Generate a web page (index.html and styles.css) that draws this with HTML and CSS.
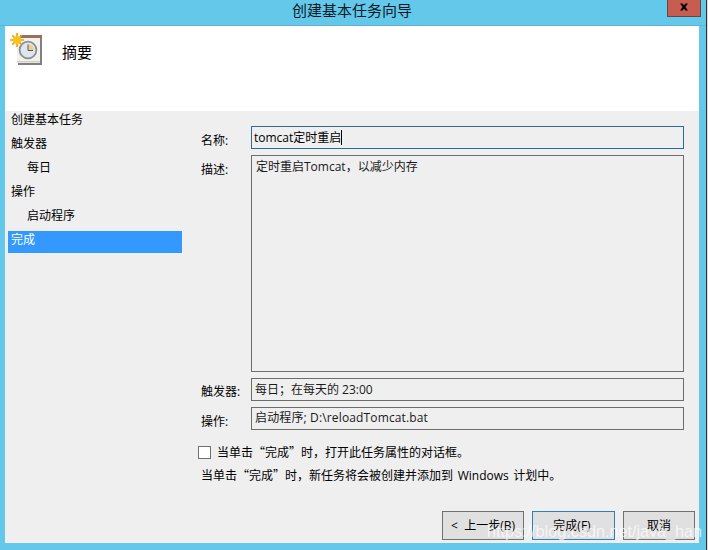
FILE: index.html
```html
<!DOCTYPE html>
<html lang="zh-CN">
<head>
<meta charset="utf-8">
<title>创建基本任务向导</title>
<link rel="stylesheet" href="styles.css">
</head>
<body>
<div class="window">
  <div class="titlebar">
    <span class="title">创建基本任务向导</span>
    <div class="close">
      <svg width="10" height="8" viewBox="0 0 10 8"><path d="M1 0.5h2.6L5 2.4 6.4 .5H9L6.4 4 9 7.5H6.4L5 5.6 3.6 7.5H1L3.6 4z" fill="#000"/></svg>
    </div>
  </div>
  <div class="client">
    <div class="header">
      <svg class="task-icon" width="34" height="34" viewBox="0 0 34 34">
        <rect x="7" y="4" width="24" height="28" fill="#808080"/>
        <rect x="6" y="5" width="23" height="25" fill="#f2f1ea"/>
        <rect x="6" y="28" width="23" height="1.4" fill="#cfcfca"/>
        <rect x="9" y="2" width="22" height="3" fill="#97705f"/>
        <circle cx="17" cy="17" r="8.4" fill="#dfe6ee" stroke="#8b9095" stroke-width="1.8"/>
        <path d="M17 11a6 6 0 0 1 6 6h-6z" fill="#f0cf8a"/>
        <path d="M17 11.5V17.5H22" fill="none" stroke="#4c5a68" stroke-width="1"/>
        <g stroke="#f29a0c" stroke-width="1.6">
          <path d="M6 0V14M-1 7H13M1.2 2.2L10.8 11.8M10.8 2.2L1.2 11.8"/>
        </g>
        <circle cx="6" cy="7" r="4" fill="#fbc318"/>
      </svg>
      <span class="header-title">摘要</span>
    </div>
    <div class="main">
      <nav class="steps">
        <div class="step">创建基本任务</div>
        <div class="step">触发器</div>
        <div class="step sub">每日</div>
        <div class="step">操作</div>
        <div class="step sub">启动程序</div>
        <div class="step current">完成</div>
      </nav>
      <div class="content">
        <div class="form">
          <label class="label">名称:</label>
          <div class="field focus">tomcat定时重启<span class="caret"></span></div>
          <label class="label">描述:</label>
          <div class="field area">定时重启Tomcat，以减少内存</div>
          <label class="label trigger">触发器:</label>
          <div class="field">每日；在每天的 23:00</div>
          <label class="label">操作:</label>
          <div class="field action">启动程序; D:\reloadTomcat.bat</div>
        </div>
        <div class="check-row">
          <span class="checkbox"></span>
          <span>当单击<span class="q">“</span>完成<span class="q">”</span>时，打开此任务属性的对话框。</span>
        </div>
        <div class="note">当单击<span class="q">“</span>完成<span class="q">”</span>时，新任务将会被创建并添加到 <span class="lat">Windows</span> 计划中。</div>
        <div class="buttons">
          <button class="btn back">&lt;&nbsp; 上一步(B)</button>
          <button class="btn finish">完成(F)</button>
          <button class="btn cancel">取消</button>
        </div>
      </div>
    </div>
  </div>
  <div class="watermark">https://blog.csdn.net/java_han</div>
</div>
</body>
</html>
```
FILE: styles.css
```css
* { box-sizing: border-box; }
html, body { margin: 0; height: 100%; background: #d8d8d8; overflow: hidden; }
body { font-family: "Open Sans", "Noto Sans CJK SC", sans-serif; font-size: 12px; color: #000; }
.window {
  position: relative;
  width: 706px;
  height: 550px;
  background: #63c8ea;
  box-shadow: 1px 0 0 #333;
  padding: 0 7px 7px 5px;
  display: flex;
  flex-direction: column;
}
.titlebar {
  position: relative;
  height: 26px;
  flex: none;
  margin: 0 -7px 0 -5px;
  padding-right: 2px;
  border-bottom: 1px solid #62b3cf;
  text-align: center;
}
.title { font-size: 15px; line-height: 20px; color: #0a1a26; }
.close {
  position: absolute;
  right: 5px;
  top: 0;
  width: 34px;
  height: 17px;
  background: #c75c51;
  border: 1px solid #5a4a4a;
  border-top: 0;
  display: flex;
  align-items: center;
  justify-content: center;
  padding-bottom: 3px;
}
.client { flex: 1; display: flex; flex-direction: column; background: #efefef; min-height: 0; }
.header { height: 85px; flex: none; background: #fff; display: flex; align-items: flex-start; padding: 7px 0 0 6px; }
.task-icon { flex: none; overflow: visible; }
.header-title { font-size: 15px; line-height: 20px; margin: 9px 0 0 17px; }
.main { flex: 1; display: flex; min-height: 0; }
.steps { width: 174px; margin-left: 3px; flex: none; display: flex; flex-direction: column; gap: 2px; }
.step { height: 22px; line-height: 18px; padding-left: 3px; }
.step.sub { padding-left: 19px; }
.step.current { background: #3399ff; color: #fff; }
.content { flex: 1; margin-left: 19px; padding-top: 15px; display: flex; flex-direction: column; min-width: 0; }
.form { display: grid; grid-template-columns: 50px 433px; grid-template-rows: 23px 217px 23px 23px; row-gap: 6px; }
.label { line-height: 16px; padding-top: 7px; }
.label.trigger { padding-top: 6px; }
.field { border: 1px solid #6d6d6d; padding: 3px 3px; line-height: 16px; color: #1a1a1a; white-space: nowrap; }
.field.focus { border-color: #2a6a9c; color: #000; padding: 3px 2px; }
.field.area { padding: 3px 4px; }
.field.action { padding-top: 2px; letter-spacing: 0.14px; }
.caret { display: inline-block; width: 1px; height: 15px; background: #000; vertical-align: -3px; }
.check-row { display: flex; align-items: center; margin: 16px 0 0 -3px; height: 13px; gap: 6px; line-height: 16px; }
.checkbox { width: 13px; height: 13px; background: #fff; border: 1px solid #707070; flex: none; }
.q { font-family: "Noto Sans CJK SC", sans-serif; }
.lat { margin: 0 1.5px; }
.note { margin-top: 8px; line-height: 16px; white-space: nowrap; }
.buttons { display: flex; justify-content: flex-end; margin-top: 27px; width: 494px; }
.btn {
  height: 29px;
  background: #e0e0e0;
  border: 1px solid #707070;
  font: inherit;
  color: #000;
  padding: 0 0 2px;
}
.back { width: 82px; }
.finish { width: 83px; margin-left: 8px; border-color: #2f7ebf; padding-right: 3px; }
.cancel { width: 72px; margin-left: 8px; }
.watermark {
  position: absolute;
  left: 487px;
  top: 520px;
  font-family: "Liberation Sans", sans-serif;
  font-size: 16.2px;
  line-height: 22px;
  color: rgba(255, 255, 255, 0.7);
  white-space: nowrap;
}
```
